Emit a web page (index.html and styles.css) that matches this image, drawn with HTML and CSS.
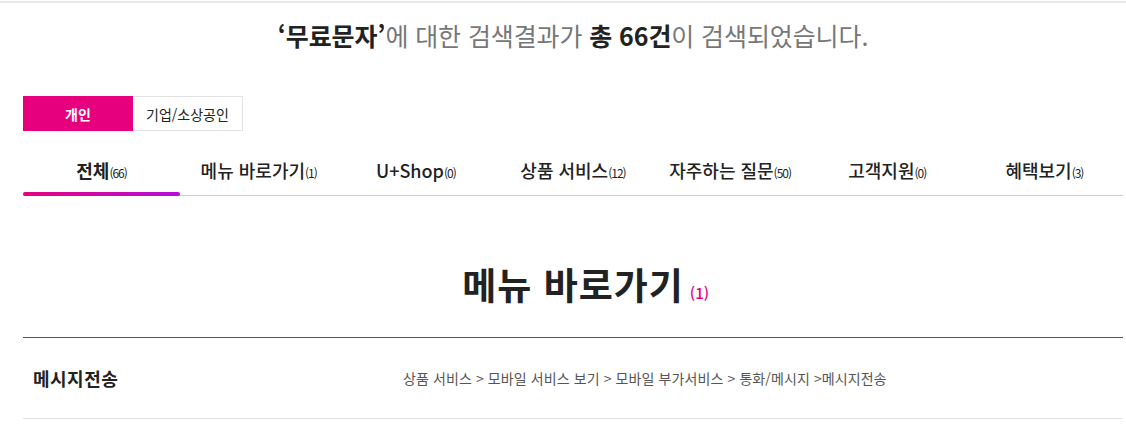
FILE: index.html
```html
<!DOCTYPE html>
<html lang="ko">
<head>
    <meta charset="UTF-8">
    <meta name="viewport" content="width=device-width, initial-scale=1.0">
    <title>검색결과</title>
    <link rel="stylesheet" href="styles.css">
</head>
<body>
    <div class="page">
        <div class="wrap">
            <!-- 검색 결과 요약 -->
            <p class="result-summary">
                <strong>‘무료문자’</strong>에 대한 검색결과가 <strong>총 66건</strong>이 검색되었습니다.
            </p>

            <!-- 개인 / 기업 토글 -->
            <div class="type-toggle">
                <button class="on">개인</button>
                <button>기업/소상공인</button>
            </div>

            <!-- 카테고리 탭 -->
            <ul class="tabs">
                <li class="active">전체<span>(66)</span></li>
                <li>메뉴 바로가기<span>(1)</span></li>
                <li>U+Shop<span>(0)</span></li>
                <li>상품 서비스<span>(12)</span></li>
                <li>자주하는 질문<span>(50)</span></li>
                <li>고객지원<span>(0)</span></li>
                <li>혜택보기<span>(3)</span></li>
            </ul>

            <!-- 메뉴 바로가기 결과 -->
            <h2 class="section-title"><em>메뉴 바로가기<span>(1)</span></em></h2>
            <ul class="result-list">
                <li>
                    <strong class="name">메시지전송</strong>
                    <span class="path">상품 서비스 &gt; 모바일 서비스 보기 &gt; 모바일 부가서비스 &gt; 통화/메시지 &gt;메시지전송</span>
                </li>
            </ul>
        </div>
    </div>
</body>
</html>
```

FILE: styles.css
```css
body {
    margin: 0;
    padding: 0;
    font-family: "Noto Sans CJK KR", "Noto Sans", sans-serif;
    color: #222;
    background: #fff;
}

.page {
    border-top: 2px solid #e8e8e8;
    margin-top: 1px;
}

.wrap {
    width: 1100px;
    margin: 0 0 0 23px;
}

.result-summary {
    margin: 0;
    padding-top: 15px;
    height: 41px;
    text-align: center;
    font-size: 25px;
    line-height: 35px;
    color: #777;
    letter-spacing: -0.1px;
}

.result-summary strong {
    color: #222;
    font-weight: 700;
}

/* 개인 / 기업 토글 */
.type-toggle {
    display: flex;
    margin-top: 37px;
}

.type-toggle button {
    width: 110px;
    height: 35px;
    border: 1px solid #e2e2e2;
    background: #fff;
    font-family: inherit;
    font-size: 14px;
    color: #222;
    padding: 0;
    cursor: pointer;
}

.type-toggle button + button {
    border-left: none;
}

.type-toggle button.on {
    background: #e6007e;
    border-color: #e6007e;
    color: #fff;
    font-weight: 700;
}

/* 탭 */
.tabs {
    display: flex;
    list-style: none;
    margin: 18px 0 0;
    padding: 0;
    border-bottom: 1px solid #ccc;
}

.tabs li {
    flex: 1;
    position: relative;
    height: 46px;
    line-height: 43px;
    text-align: center;
    font-size: 18px;
    font-weight: 500;
    color: #222;
}

.tabs li span {
    font-size: 12px;
    font-weight: 400;
    letter-spacing: -1px;
}

.tabs li.active {
    font-weight: 700;
}

.tabs li.active::after {
    content: "";
    position: absolute;
    left: 0;
    right: 0;
    bottom: -1px;
    height: 4px;
    border-radius: 2px;
    background: linear-gradient(to right, #e6007e, #b40fd8);
}

/* 섹션 */
.section-title {
    margin: 0;
    padding-top: 58px;
    height: 83px;
    text-align: center;
    font-size: 37px;
    line-height: 60px;
    font-weight: 700;
    color: #222;
    border-bottom: 1px solid #555;
    letter-spacing: 1px;
}

.section-title em {
    font-style: normal;
    position: relative;
}

.section-title span {
    position: absolute;
    left: 100%;
    bottom: -12px;
    margin-left: 6px;
    font-size: 15px;
    font-weight: 500;
    color: #e6007e;
    letter-spacing: 0;
    white-space: nowrap;
}

.result-list {
    list-style: none;
    margin: 0;
    padding: 0;
}

.result-list li {
    display: flex;
    align-items: center;
    height: 80px;
    border-bottom: 1px solid #e2e2e2;
}

.result-list .name {
    width: 370px;
    padding-left: 10px;
    font-size: 18px;
    font-weight: 700;
    color: #222;
    letter-spacing: 0.5px;
}

.result-list .path {
    font-size: 14px;
    color: #555;
    letter-spacing: 0.1px;
}
```
